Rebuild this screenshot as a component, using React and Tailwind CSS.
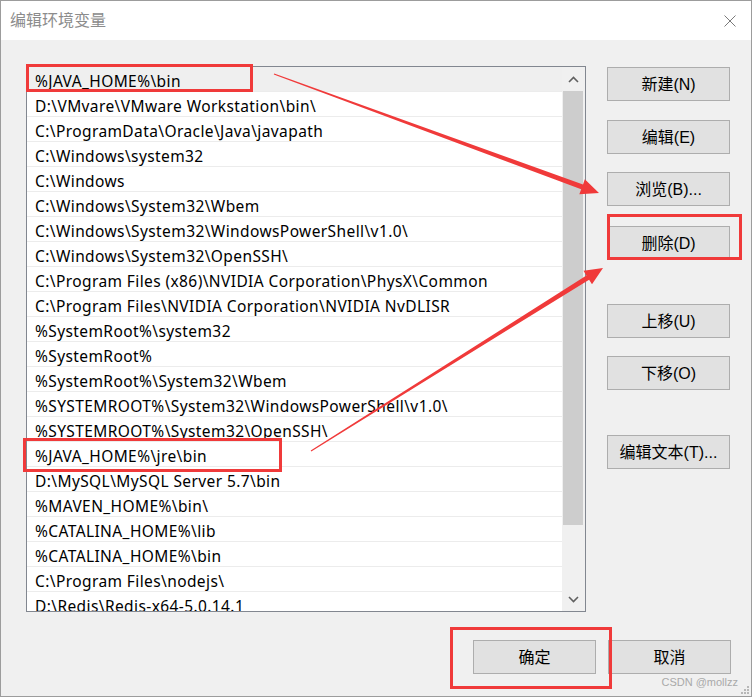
import React from "react";

const PATHS = [
  "%JAVA_HOME%\\bin",
  "D:\\VMvare\\VMware Workstation\\bin\\",
  "C:\\ProgramData\\Oracle\\Java\\javapath",
  "C:\\Windows\\system32",
  "C:\\Windows",
  "C:\\Windows\\System32\\Wbem",
  "C:\\Windows\\System32\\WindowsPowerShell\\v1.0\\",
  "C:\\Windows\\System32\\OpenSSH\\",
  "C:\\Program Files (x86)\\NVIDIA Corporation\\PhysX\\Common",
  "C:\\Program Files\\NVIDIA Corporation\\NVIDIA NvDLISR",
  "%SystemRoot%\\system32",
  "%SystemRoot%",
  "%SystemRoot%\\System32\\Wbem",
  "%SYSTEMROOT%\\System32\\WindowsPowerShell\\v1.0\\",
  "%SYSTEMROOT%\\System32\\OpenSSH\\",
  "%JAVA_HOME%\\jre\\bin",
  "D:\\MySQL\\MySQL Server 5.7\\bin",
  "%MAVEN_HOME%\\bin\\",
  "%CATALINA_HOME%\\lib",
  "%CATALINA_HOME%\\bin",
  "C:\\Program Files\\nodejs\\",
  "D:\\Redis\\Redis-x64-5.0.14.1",
];

// side buttons with their top margin
const SIDE_BUTTONS = [
  { label: "新建(N)", mt: "mt-[1px]" },
  { label: "编辑(E)", mt: "mt-[19px]" },
  { label: "浏览(B)...", mt: "mt-[18px]" },
  { label: "删除(D)", mt: "mt-[20px]" },
  { label: "上移(U)", mt: "mt-[44px]" },
  { label: "下移(O)", mt: "mt-[18px]" },
  { label: "编辑文本(T)...", mt: "mt-[45px]" },
];

const arrowPoints = (x1, y1, x2, y2, w0, w1, headLen, headHalf) => {
  const dx = x2 - x1;
  const dy = y2 - y1;
  const len = Math.hypot(dx, dy);
  const ux = dx / len;
  const uy = dy / len;
  const nx = -uy;
  const ny = ux;
  const bx = x2 - ux * headLen;
  const by = y2 - uy * headLen;
  const pts = [
    [x1 + (nx * w0) / 2, y1 + (ny * w0) / 2],
    [bx + (nx * w1) / 2, by + (ny * w1) / 2],
    [bx + nx * headHalf, by + ny * headHalf],
    [x2, y2],
    [bx - nx * headHalf, by - ny * headHalf],
    [bx - (nx * w1) / 2, by - (ny * w1) / 2],
    [x1 - (nx * w0) / 2, y1 - (ny * w0) / 2],
  ];
  return pts.map((p) => p.map((v) => v.toFixed(1)).join(",")).join(" ");
};

function WinButton({ label, className = "" }) {
  return (
    <button
      type="button"
      className={`flex h-[34px] w-[123px] items-center justify-center border border-[#adadad] bg-[#e1e1e1] pt-[2px] text-[16px] text-black ${className}`}
    >
      {label}
    </button>
  );
}

function Chevron({ down }) {
  return (
    <svg width="11" height="7" viewBox="0 0 11 7">
      <path
        d={down ? "M1 1 L5.5 5.5 L10 1" : "M1 6 L5.5 1.5 L10 6"}
        fill="none"
        stroke="#606060"
        strokeWidth="1.6"
      />
    </svg>
  );
}

function App() {
  return (
    <div
      className="relative h-[697px] w-[752px] overflow-hidden border border-[#9c9c9c] bg-[#f0f0f0] text-black"
      style={{ fontFamily: '"Liberation Sans", "Noto Sans CJK SC", sans-serif' }}
    >
      <header className="flex h-[39px] items-center justify-between bg-white pl-[9px] pr-[15px]">
        <span className="text-[16px] text-[#8c8c8c]">编辑环境变量</span>
        <svg width="12" height="12" viewBox="0 0 12 12">
          <path d="M0.5 0.5 L11.5 11.5 M11.5 0.5 L0.5 11.5" stroke="#7a7a7a" strokeWidth="1" />
        </svg>
      </header>

      <div className="flex pl-[25px] pt-[26px]">
        <div className="flex h-[546px] w-[560px] border border-[#828790] bg-white">
          <ul className="flex-1 overflow-hidden font-['Noto_Sans',sans-serif]">
            {PATHS.map((p, i) => (
              <li
                key={p}
                className={`h-[25px] overflow-hidden whitespace-nowrap border-b border-[#ececec] pl-[8px] pt-[1px] text-[15.5px] leading-[26px] tracking-[0.4px] ${
                  i === 0 ? "bg-[#efefef]" : ""
                }`}
              >
                {p}
              </li>
            ))}
          </ul>
          <div className="flex w-[23px] flex-col bg-[#f0f0f0]">
            <div className="flex h-[24px] items-center justify-center">
              <Chevron />
            </div>
            <div className="ml-[1px] h-[434px] w-[20px] bg-[#cdcdcd]" />
            <div className="flex-1" />
            <div className="flex h-[24px] items-center justify-center">
              <Chevron down />
            </div>
          </div>
        </div>

        <div className="ml-[21px] flex flex-col">
          {SIDE_BUTTONS.map((b) => (
            <WinButton key={b.label} label={b.label} className={b.mt} />
          ))}
        </div>
      </div>

      <div className="mt-[28px] flex justify-end gap-[12px] pr-[20px]">
        <WinButton label="确定" />
        <WinButton label="取消" />
      </div>

      {/* annotations */}
      <div className="pointer-events-none absolute left-[25px] top-[63px] h-[28px] w-[227px] border-[3px] border-[#f03a3a]" />
      <div className="pointer-events-none absolute left-[22px] top-[437px] h-[34px] w-[259px] border-[3px] border-[#f03a3a]" />
      <div className="pointer-events-none absolute left-[606px] top-[213px] h-[46px] w-[135px] border-[3px] border-[#f03a3a]" />
      <div className="pointer-events-none absolute left-[449px] top-[626px] h-[62px] w-[162px] border-[3px] border-[#f03a3a]" />

      <svg className="pointer-events-none absolute left-[-1px] top-[-1px]" width="752" height="697" viewBox="0 0 752 697">
        <polygon points={arrowPoints(274, 74, 599, 193, 1.2, 5, 18, 8)} fill="#f03a3a" />
        <polygon points={arrowPoints(311, 451, 603, 268, 1.2, 5, 18, 8)} fill="#f03a3a" />
      </svg>

      <span className="pointer-events-none absolute bottom-[6px] right-[13px] text-[11px] text-[#a9a9a9]">
        CSDN @mollzz
      </span>
      <svg className="absolute bottom-[1px] right-[1px]" width="10" height="10" viewBox="0 0 10 10">
        {[
          [7, 1],
          [4, 4],
          [7, 4],
          [1, 7],
          [4, 7],
          [7, 7],
        ].map(([x, y]) => (
          <rect key={`${x}-${y}`} x={x} y={y} width="2" height="2" fill="#b8b8b8" />
        ))}
      </svg>
    </div>
  );
}

export default App;
